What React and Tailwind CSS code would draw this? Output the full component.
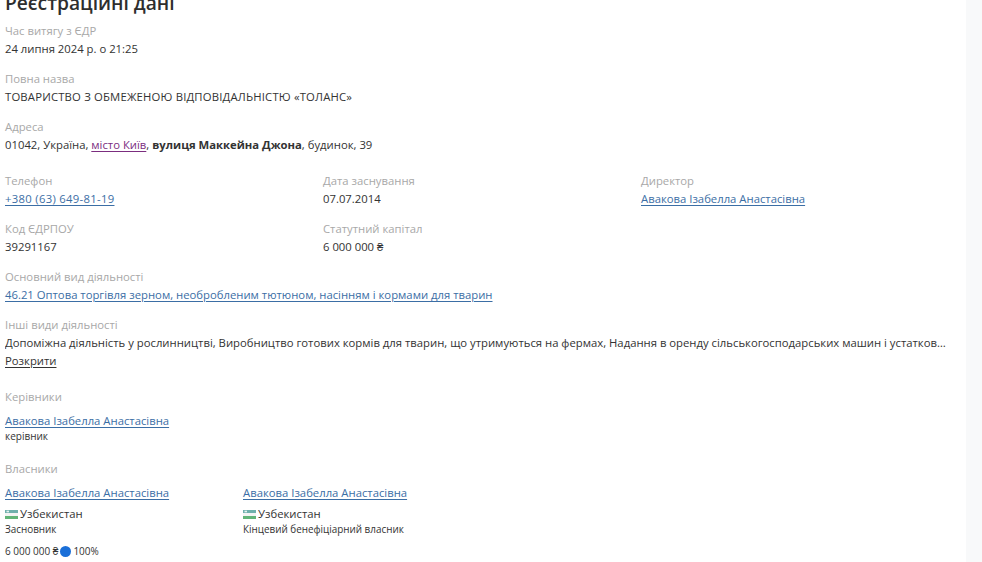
const linkClass = 'text-[#3b6ea5] underline underline-offset-2';

function Field({ label, children, className = '' }) {
  return (
    <div className={className}>
      <div className="h-[18px] leading-[18px] text-[#a8a8a8]">{label}</div>
      <div className="h-[18px] leading-[18px] text-[#333333]">{children}</div>
    </div>
  );
}

function UzFlag() {
  return (
    <svg width="13" height="9" viewBox="0 0 13 9" className="shrink-0">
      <rect width="13" height="3" fill="#6fb0ac" />
      <rect x="1.5" y="0.7" width="2.5" height="1.6" fill="#e6f2f0" />
      <rect y="3" width="13" height="3" fill="#f4f4f4" />
      <rect y="6" width="13" height="3" fill="#62b578" />
    </svg>
  );
}

function Owner({ role, className = '', children }) {
  return (
    <div className={className}>
      <div className="h-[18px] leading-[18px]">
        <a className={linkClass}>Авакова Ізабелла Анастасівна</a>
      </div>
      <div className="mt-[3px] flex h-[18px] items-center gap-[2px] text-[#333333]">
        <UzFlag />
        <span>Узбекистан</span>
      </div>
      <div className="h-[13px] text-[9.9px] leading-[13px] text-[#333333]">{role}</div>
      {children}
    </div>
  );
}

export default function App() {
  return (
    <div className="flex h-[562px] w-[982px] overflow-hidden bg-white font-['Open_Sans',sans-serif] text-[11.3px]">
      <main className="w-[966px] pl-[5px]">
        <h1 className="mt-[-12px] h-[34px] text-[19.2px] leading-[30px] font-semibold text-[#2e2e2e]">Реєстраційні дані</h1>

        <Field label="Час витягу з ЄДР">24 липня 2024 р. о 21:25</Field>
        <Field label="Повна назва" className="mt-[12px]">
          <span className="tracking-[0.18px]">ТОВАРИСТВО З ОБМЕЖЕНОЮ ВІДПОВІДАЛЬНІСТЮ «ТОЛАНС»</span>
        </Field>
        <Field label="Адреса" className="mt-[12px]">
          01042, Україна, <a className="text-[#7b2d7f] underline underline-offset-2">місто Київ</a>, <b className="font-bold">вулиця Маккейна Джона</b>, будинок, 39
        </Field>

        <div className="mt-[18px] grid grid-cols-[318px_318px_1fr] gap-y-[12px]">
          <Field label="Телефон"><a className={`${linkClass} tracking-[0.3px]`}>+380 (63) 649-81-19</a></Field>
          <Field label="Дата заснування">07.07.2014</Field>
          <Field label="Директор"><a className={linkClass}>Авакова Ізабелла Анастасівна</a></Field>
          <Field label="Код ЄДРПОУ">39291167</Field>
          <Field label="Статутний капітал">6 000 000 ₴</Field>
        </div>

        <Field label="Основний вид діяльності" className="mt-[12px]">
          <a className={linkClass}>46.21 Оптова торгівля зерном, необробленим тютюном, насінням і кормами для тварин</a>
        </Field>
        <Field label="Інші види діяльності" className="mt-[12px]">
          <span className="block w-[944px] truncate">Допоміжна діяльність у рослинництві, Виробництво готових кормів для тварин, що утримуються на фермах, Надання в оренду сільськогосподарських машин і устатковання</span>
        </Field>
        <div className="h-[18px] leading-[18px] text-[#333333] underline underline-offset-2">Розкрити</div>

        <div className="mt-[18px] h-[18px] leading-[18px] text-[#a8a8a8]">Керівники</div>
        <div className="mt-[6px] h-[18px] leading-[18px]"><a className={linkClass}>Авакова Ізабелла Анастасівна</a></div>
        <div className="h-[12px] text-[10px] leading-[12px] text-[#333333]">керівник</div>

        <div className="mt-[18px] h-[18px] leading-[18px] text-[#a8a8a8]">Власники</div>
        <div className="mt-[6px] flex">
          <Owner role="Засновник" className="w-[238px]">
            <div className="mt-[8px] flex h-[15px] items-center text-[10px] text-[#333333]">
              <span>6 000 000 ₴</span>
              <span className="ml-[2px] mr-[2px] size-[11px] rounded-full bg-[#1a6fd8]" />
              <span>100%</span>
            </div>
          </Owner>
          <Owner role="Кінцевий бенефіціарний власник" />
        </div>
      </main>
      <aside className="flex-1 bg-[#f8f9fa]" />
    </div>
  );
}
